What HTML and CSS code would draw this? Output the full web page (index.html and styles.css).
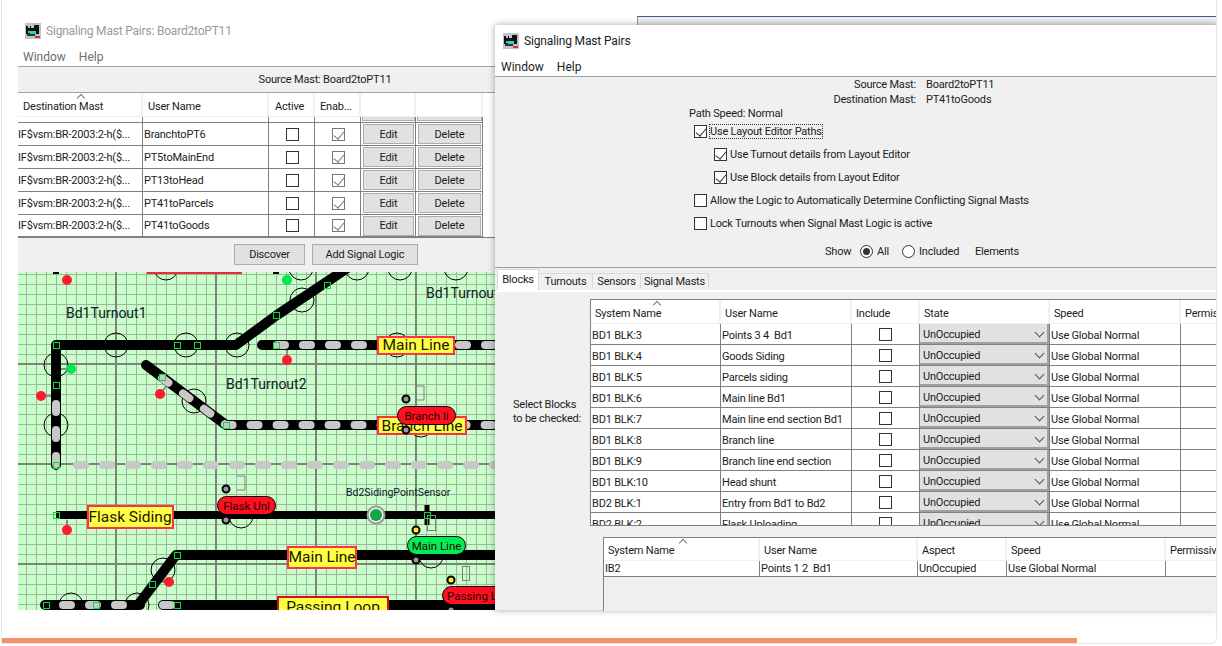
FILE: index.html
```html
<!DOCTYPE html>
<html lang="en">
<head>
    <meta charset="UTF-8">
    <title>Signaling Mast Pairs</title>
    <link rel="stylesheet" href="styles.css">
</head>
<body>
    <svg class="defs" width="0" height="0">
        <symbol id="jmri" viewBox="0 0 16 16">
            <rect width="16" height="16" fill="#c4c4c4"/>
            <path d="M1 3h2v2h2V3h1v2h3V2h5v9H1z" fill="#111"/>
            <rect x="3" y="8" width="8" height="2" fill="#2fd0d0"/>
            <rect x="5" y="10" width="6" height="2" fill="#2fd0d0"/>
            <rect x="10" y="13" width="5" height="2" fill="#c8343c"/>
            <rect x="2" y="11" width="8" height="2" fill="#333"/>
        </symbol>
    </svg>

    <div class="card">
        <div class="far-strip"></div>

        <!-- back window, mostly hidden by the other one -->
        <section class="win win-back">
            <div class="title-bar">
                <svg class="app-icon"><use href="#jmri"/></svg>
                <span>Signaling Mast Pairs: Board2toPT11</span>
            </div>
            <div class="menu-bar"><span>Window</span><span>Help</span></div>
            <div class="source-bar">Source Mast: Board2toPT11</div>
            <table class="pairs">
                <thead>
                    <tr>
                        <th class="sorted">Destination Mast</th>
                        <th>User Name</th>
                        <th>Active</th>
                        <th>Enab...</th>
                        <th></th>
                        <th></th>
                    </tr>
                </thead>
                <tbody>
                    <tr class="cut"><td></td><td></td><td></td><td></td><td><span class="btn"></span></td><td><span class="btn"></span></td></tr>
                    <tr>
                        <td>IF$vsm:BR-2003:2-h($...</td><td>BranchtoPT6</td>
                        <td class="mid"><span class="chk"></span></td><td class="mid"><span class="chk soft on"></span></td>
                        <td><span class="btn">Edit</span></td><td><span class="btn">Delete</span></td>
                    </tr>
                    <tr>
                        <td>IF$vsm:BR-2003:2-h($...</td><td>PT5toMainEnd</td>
                        <td class="mid"><span class="chk"></span></td><td class="mid"><span class="chk soft on"></span></td>
                        <td><span class="btn">Edit</span></td><td><span class="btn">Delete</span></td>
                    </tr>
                    <tr>
                        <td>IF$vsm:BR-2003:2-h($...</td><td>PT13toHead</td>
                        <td class="mid"><span class="chk"></span></td><td class="mid"><span class="chk soft on"></span></td>
                        <td><span class="btn">Edit</span></td><td><span class="btn">Delete</span></td>
                    </tr>
                    <tr>
                        <td>IF$vsm:BR-2003:2-h($...</td><td>PT41toParcels</td>
                        <td class="mid"><span class="chk"></span></td><td class="mid"><span class="chk soft on"></span></td>
                        <td><span class="btn">Edit</span></td><td><span class="btn">Delete</span></td>
                    </tr>
                    <tr>
                        <td>IF$vsm:BR-2003:2-h($...</td><td>PT41toGoods</td>
                        <td class="mid"><span class="chk"></span></td><td class="mid"><span class="chk soft on"></span></td>
                        <td><span class="btn">Edit</span></td><td><span class="btn">Delete</span></td>
                    </tr>
                </tbody>
            </table>
            <div class="pairs-foot">
                <span class="btn wide discover">Discover</span>
                <span class="btn wide add-logic">Add Signal Logic</span>
            </div>

            <!-- layout editor panel, viewBox uses screen coordinates -->
            <svg class="layout" width="478" height="338" viewBox="18 272 478 338">
                <defs>
                    <pattern id="grid" patternUnits="userSpaceOnUse" x="16" y="64" width="100" height="100">
                        <path class="minor" d="M10.5 0V100M20.5 0V100M30.5 0V100M40.5 0V100M50.5 0V100M60.5 0V100M70.5 0V100M80.5 0V100M90.5 0V100M0 10.5H100M0 20.5H100M0 30.5H100M0 40.5H100M0 50.5H100M0 60.5H100M0 70.5H100M0 80.5H100M0 90.5H100"/>
                        <path class="major" d="M0 0V100M100 0V100M0 0H100M0 100H100"/>
                    </pattern>
                </defs>
                <rect class="board" x="18" y="272" width="478" height="338"/>
                <rect x="18" y="272" width="478" height="338" fill="url(#grid)"/>

                <!-- stems from signal heads -->
                <path class="stem" d="M287 350V360M56 369H71M41 396H56M160 394L168 384M67 520V530M169 582L160 578"/>

                <!-- turnout circles -->
                <g class="ring">
                    <circle cx="116" cy="345" r="12"/><circle cx="186" cy="345" r="12"/><circle cx="237" cy="345" r="12"/>
                    <circle cx="302" cy="300" r="12"/><circle cx="56" cy="365" r="12"/><circle cx="56" cy="425" r="12"/>
                    <circle cx="194" cy="401" r="12"/><circle cx="397" cy="345" r="12"/><circle cx="421" cy="425" r="12"/>
                    <circle cx="166" cy="268" r="12"/><circle cx="301" cy="268" r="12"/><circle cx="357" cy="268" r="12"/>
                    <circle cx="400" cy="268" r="12"/><circle cx="456" cy="268" r="12"/><circle cx="241" cy="516" r="12"/>
                    <circle cx="431" cy="556" r="12"/><circle cx="163" cy="570" r="12"/><circle cx="71" cy="605" r="12"/>
                    <circle cx="137" cy="605" r="12"/>
                </g>

                <!-- track -->
                <path class="trk" d="M56 465V345H236L277 315L352 265"/>
                <path class="trk" d="M262 345H500"/>
                <path class="trk" d="M146 365L226 425H500"/>
                <path class="trk thin" d="M56 515H500"/>
                <path class="trk stub" d="M427 505V525"/>
                <path class="trk" d="M500 555H176L138 605"/>
                <path class="trk" d="M45 605H140"/>
                <path class="trk" d="M163 605H500"/>
                <path class="dash" d="M277 345H500"/>
                <path class="dash" d="M162 378L226 425H500"/>
                <path class="dash" d="M56 404V465"/>
                <path class="dash" d="M77 465H500"/>
                <path class="dash" d="M63 605H140"/>
                <path class="dash" d="M163 605H175"/>
                <path class="scrap" d="M53 272h6v2h-6zM148 272h6v2h-6zM273 272h6v2h-6z"/>
                <rect class="scrap-label" x="147" y="271" width="95" height="3"/>

                <!-- block boundary squares -->
                <g class="sq">
                    <rect x="53.5" y="342.5" width="6" height="6"/><rect x="174.5" y="342.5" width="6" height="6"/><rect x="194.5" y="342.5" width="6" height="6"/>
                    <rect x="273.5" y="312.5" width="6" height="6"/><rect x="324.5" y="282.5" width="6" height="6"/><rect x="273.5" y="342.5" width="6" height="6"/>
                    <rect x="53.5" y="382.5" width="6" height="6"/><rect x="159.5" y="374.5" width="6" height="6"/><rect x="223.5" y="422.5" width="6" height="6"/>
                    <rect x="53.5" y="462.5" width="6" height="6"/><rect x="53.5" y="512.5" width="6" height="6"/><rect x="424.5" y="512.5" width="6" height="6"/>
                    <rect x="174.5" y="552.5" width="6" height="6"/><rect x="149.5" y="581.5" width="6" height="6"/><rect x="43.5" y="602.5" width="6" height="6"/>
                    <rect x="93.5" y="602.5" width="6" height="6"/><rect x="174.5" y="602.5" width="6" height="6"/>
                </g>

                <!-- signal heads -->
                <g class="lamp-red">
                    <circle cx="67" cy="280" r="5"/><circle cx="287" cy="360" r="5"/><circle cx="41" cy="396" r="5"/>
                    <circle cx="160" cy="394" r="5"/><circle cx="67" cy="530" r="5"/><circle cx="169" cy="582" r="5"/>
                </g>
                <g class="lamp-green">
                    <circle cx="287" cy="280" r="5"/><circle cx="71" cy="369" r="5"/>
                </g>

                <!-- sensor outlines -->
                <g class="memo">
                    <path d="M417 386h7v14h-7"/><path d="M237 476h8v14h-8"/>
                    <rect x="427.5" y="515.5" width="8" height="15"/><rect x="462.5" y="566.5" width="7" height="14"/>
                </g>

                <text class="tag" x="66" y="318">Bd1Turnout1</text>
                <text class="tag" x="226" y="389">Bd1Turnout2</text>
                <text class="tag" x="426" y="298">Bd1Turnout3</text>
                <text class="tag small" x="346" y="496">Bd2SidingPointSensor</text>

                <circle class="sensor-rim" cx="376" cy="515" r="8.5"/>
                <circle class="sensor-core" cx="376" cy="515" r="6"/>

                <!-- block labels -->
                <g class="blk">
                    <rect x="378" y="337" width="76" height="17"/><text x="416" y="350">Main Line</text>
                    <rect x="378" y="417" width="88" height="17"/><text x="422" y="431">Branch Line</text>
                    <rect x="88" y="506" width="85" height="22"/><text x="130" y="522">Flask Siding</text>
                    <rect x="288" y="547" width="68" height="21"/><text x="322" y="562">Main Line</text>
                    <rect class="deep" x="278" y="597" width="110" height="24"/><text x="333" y="612">Passing Loop</text>
                </g>

                <!-- occupancy pills with their detector dots -->
                <g class="dot">
                    <circle cx="406" cy="399" r="3.5"/><circle cx="406" cy="430" r="3.5"/><circle cx="226" cy="489" r="3.5"/>
                    <circle cx="226" cy="520" r="3.5"/><circle cx="416" cy="560" r="3.5"/><circle cx="451" cy="610" r="3.5"/>
                </g>
                <g class="dot yellow">
                    <circle cx="416" cy="530" r="3.5"/><circle cx="451" cy="580" r="3.5"/>
                </g>
                <g class="pill">
                    <rect x="397.5" y="406.5" width="58" height="18" rx="9"/><text x="426.5" y="420">Branch li</text>
                    <rect x="217.5" y="496.5" width="58" height="18" rx="9"/><text x="246.5" y="510">Flask Unl</text>
                    <rect class="go" x="407.5" y="536.5" width="58" height="18" rx="9"/><text x="436.5" y="550">Main Line</text>
                    <rect x="442.5" y="586.5" width="70" height="18" rx="9"/><text x="447" y="600" class="start">Passing Loop</text>
                </g>
            </svg>
        </section>

        <!-- front window -->
        <section class="win win-front">
            <div class="title-bar">
                <svg class="app-icon"><use href="#jmri"/></svg>
                <span>Signaling Mast Pairs</span>
            </div>
            <div class="menu-bar"><span>Window</span><span>Help</span></div>
            <div class="options">
                <div class="mast-row"><label>Source Mast:</label><span>Board2toPT11</span></div>
                <div class="mast-row"><label>Destination Mast:</label><span>PT41toGoods</span></div>
                <div class="path-speed">Path Speed: Normal</div>
                <div class="opt"><span class="chk on"></span><span class="focus">Use Layout Editor Paths</span></div>
                <div class="opt sub"><span class="chk on"></span><span>Use Turnout details from Layout Editor</span></div>
                <div class="opt sub"><span class="chk on"></span><span>Use Block details from Layout Editor</span></div>
                <div class="opt"><span class="chk"></span><span>Allow the Logic to Automatically Determine Conflicting Signal Masts</span></div>
                <div class="opt"><span class="chk"></span><span>Lock Turnouts when Signal Mast Logic is active</span></div>
                <div class="show-row">
                    <span class="show-lbl">Show</span>
                    <span class="radio on"></span><span class="all-lbl">All</span>
                    <span class="radio"></span><span class="inc-lbl">Included</span>
                    <span>Elements</span>
                </div>
            </div>
            <div class="tabs">
                <span class="tab active">Blocks</span>
                <span class="tab t-turnouts">Turnouts</span>
                <span class="tab t-sensors">Sensors</span>
                <span class="tab t-masts">Signal Masts</span>
            </div>
            <div class="pane">
                <div class="pane-label">Select Blocks<br>to be checked:</div>
                <div class="pane-tables">
                    <div class="scroll upper">
                        <table class="grid blocks">
                            <thead>
                                <tr><th class="sorted">System Name</th><th>User Name</th><th>Include</th><th>State</th><th>Speed</th><th>Permissive</th></tr>
                            </thead>
                            <tbody>
                                <tr><td>BD1 BLK:3</td><td>Points 3 4&nbsp; Bd1</td><td class="mid"><span class="chk"></span></td><td class="combo-cell"><span class="combo">UnOccupied</span></td><td>Use Global Normal</td><td></td></tr>
                                <tr><td>BD1 BLK:4</td><td>Goods Siding</td><td class="mid"><span class="chk"></span></td><td class="combo-cell"><span class="combo">UnOccupied</span></td><td>Use Global Normal</td><td></td></tr>
                                <tr><td>BD1 BLK:5</td><td>Parcels siding</td><td class="mid"><span class="chk"></span></td><td class="combo-cell"><span class="combo">UnOccupied</span></td><td>Use Global Normal</td><td></td></tr>
                                <tr><td>BD1 BLK:6</td><td>Main line Bd1</td><td class="mid"><span class="chk"></span></td><td class="combo-cell"><span class="combo">UnOccupied</span></td><td>Use Global Normal</td><td></td></tr>
                                <tr><td>BD1 BLK:7</td><td>Main line end section Bd1</td><td class="mid"><span class="chk"></span></td><td class="combo-cell"><span class="combo">UnOccupied</span></td><td>Use Global Normal</td><td></td></tr>
                                <tr><td>BD1 BLK:8</td><td>Branch line</td><td class="mid"><span class="chk"></span></td><td class="combo-cell"><span class="combo">UnOccupied</span></td><td>Use Global Normal</td><td></td></tr>
                                <tr><td>BD1 BLK:9</td><td>Branch line end section</td><td class="mid"><span class="chk"></span></td><td class="combo-cell"><span class="combo">UnOccupied</span></td><td>Use Global Normal</td><td></td></tr>
                                <tr><td>BD1 BLK:10</td><td>Head shunt</td><td class="mid"><span class="chk"></span></td><td class="combo-cell"><span class="combo">UnOccupied</span></td><td>Use Global Normal</td><td></td></tr>
                                <tr><td>BD2 BLK:1</td><td>Entry from Bd1 to Bd2</td><td class="mid"><span class="chk"></span></td><td class="combo-cell"><span class="combo">UnOccupied</span></td><td>Use Global Normal</td><td></td></tr>
                                <tr><td>BD2 BLK:2</td><td>Flask Uploading</td><td class="mid"><span class="chk"></span></td><td class="combo-cell"><span class="combo">UnOccupied</span></td><td>Use Global Normal</td><td></td></tr>
                            </tbody>
                        </table>
                    </div>
                    <div class="scroll lower">
                        <table class="grid masts">
                            <thead>
                                <tr><th class="sorted">System Name</th><th>User Name</th><th>Aspect</th><th>Speed</th><th>Permissive</th></tr>
                            </thead>
                            <tbody>
                                <tr><td>IB2</td><td>Points 1 2&nbsp; Bd1</td><td>UnOccupied</td><td>Use Global Normal</td><td></td></tr>
                            </tbody>
                        </table>
                    </div>
                </div>
            </div>
        </section>

        <div class="progress"></div>
    </div>
</body>
</html>
```

FILE: styles.css
```css
* {
    box-sizing: border-box;
}
body {
    margin: 0;
    background: #fff;
    font-family: Roboto, 'Liberation Sans', Arial, sans-serif;
    font-size: 11px;
    letter-spacing: -0.2px;
    color: #1c1c1c;
    overflow: hidden;
}
.defs {
    position: absolute;
}
.card {
    position: relative;
    width: 1216px;
    height: 644px;
    margin-left: 1px;
    border: 1px solid #e6e6ee;
    border-top: none;
    border-radius: 0 0 6px 0;
    display: flex;
    flex-direction: column;
    justify-content: flex-end;
    overflow: hidden;
}
.progress {
    width: 1075px;
    height: 5px;
    background: #f79068;
}
.far-strip {
    position: absolute;
    left: 635px;
    top: 16px;
    right: 0;
    height: 12px;
    border-top: 1px solid #3f5b82;
    border-left: 1px solid #999;
    background: linear-gradient(#f2f2f2, #dcdcdc);
}

/* windows */
.win {
    position: absolute;
    background: #fff;
}
.win-back {
    left: 16px;
    top: 18px;
    width: 480px;
    height: 592px;
}
.win-front {
    left: 493px;
    top: 25px;
    width: 722px;
    height: 585px;
    background: #f0f0f0;
    box-shadow: 0 0 7px rgba(0,0,0,0.35);
}
.title-bar {
    display: flex;
    align-items: center;
    background: #fff;
    font-size: 12px;
}
.app-icon {
    width: 16px;
    height: 16px;
    flex: none;
}
.win-back .title-bar {
    height: 26px;
    padding-left: 7px;
    gap: 5px;
    color: #999;
}
.win-front .title-bar {
    height: 32px;
    padding-left: 8px;
    gap: 5px;
    letter-spacing: -0.15px;
}
.menu-bar {
    display: flex;
    background: #fff;
    border-bottom: 1px solid #a0a0a0;
    font-size: 12px;
    letter-spacing: 0;
}
.win-back .menu-bar {
    height: 23px;
    padding: 6px 0 0 5px;
    gap: 13px;
    color: #6e6e6e;
}
.win-front .menu-bar {
    height: 20px;
    padding: 3px 0 0 6px;
    gap: 13px;
}

/* back window table */
.source-bar {
    height: 26px;
    background: #f0f0f0;
    border-bottom: 1px solid #a0a0a0;
    text-align: center;
    line-height: 25px;
    padding-left: 134px;
}
.pairs {
    width: 465px;
    border-collapse: separate;
    border-spacing: 0;
    table-layout: fixed;
}
.pairs th {
    height: 24px;
    font-weight: 400;
    text-align: left;
    padding: 4px 0 0 5px;
    border-right: 2px solid #f0f0f0;
    border-bottom: 1px solid #f0f0f0;
    position: relative;
}
.pairs th:nth-child(1) { width: 125px; }
.pairs th:nth-child(2) { width: 126px; }
.pairs th:nth-child(3) { width: 46px; padding-left: 6px; }
.pairs th:nth-child(4) { width: 46px; }
.pairs th:nth-child(5) { width: 55px; }
.pairs th:nth-child(6) { width: 67px; }
.pairs td {
    height: 23px;
    padding: 0 0 0 1px;
    border-right: 1px solid #808080;
    border-bottom: 1px solid #808080;
    white-space: nowrap;
    overflow: hidden;
}
.pairs td:first-child {
    padding-left: 0;
}
.pairs tr.cut td {
    height: 6px;
    padding: 0;
    line-height: 0;
}
.pairs tr.cut .btn {
    height: 4px;
    margin: 0 0 1px 1px;
    border-top: none;
}
.pairs tr:last-child td {
    border-bottom: 2px solid #808080;
}
.mid {
    text-align: center;
}
.btn {
    display: flex;
    align-items: center;
    justify-content: center;
    height: 20px;
    margin: 0 1px;
    background: #e1e1e1;
    border: 1px solid #adadad;
}
.pairs-foot {
    height: 35px;
    background: #f0f0f0;
    display: flex;
    align-items: flex-start;
    padding-top: 6px;
    border-top: 1px solid #808080;
    margin-top: -1px;
}
.btn.wide {
    height: 21px;
    margin: 0;
}
.discover {
    width: 71px;
    margin-left: 216px !important;
}
.add-logic {
    width: 106px;
    margin-left: 7px !important;
}

/* checkboxes */
.chk {
    display: inline-block;
    position: relative;
    vertical-align: middle;
    width: 13px;
    height: 13px;
    background: #fff;
    border: 1px solid #333;
}
.chk.soft {
    border-color: #777;
}
.chk.on::after {
    content: "";
    position: absolute;
    left: 3px;
    top: 0;
    width: 5px;
    height: 9px;
    border: solid #333;
    border-width: 0 1px 1px 0;
    transform: rotate(40deg);
}
.chk.soft.on::after {
    border-color: #777;
}

/* layout panel */
.layout {
    display: block;
    letter-spacing: 0;
}
.board { fill: #c8ffc8; }
.minor { stroke: #a3b3a3; stroke-width: 1; fill: none; }
.major { stroke: #808080; stroke-width: 2; fill: none; }
.stem { stroke: #8a8a8a; stroke-width: 2; fill: none; }
.ring { fill: none; stroke: #000; stroke-width: 1; }
.trk { fill: none; stroke: #000; stroke-width: 10; stroke-linecap: round; stroke-linejoin: round; }
.trk.thin { stroke-width: 8; stroke-linecap: butt; }
.trk.stub { stroke-width: 5; stroke-linecap: butt; }
.dash { fill: none; stroke: #c8c8c8; stroke-width: 8; stroke-linecap: round; stroke-dasharray: 8 18; }
.scrap { fill: #000; }
.scrap-label { fill: #e83030; }
.sq { fill: none; stroke: #00e040; stroke-width: 1; }
.lamp-red { fill: #ff1a30; }
.lamp-green { fill: #00e84c; }
.memo { fill: none; stroke: #808080; stroke-width: 1; }
.tag { font-size: 14px; fill: #10202a; }
.tag.small { font-size: 10.5px; }
.sensor-rim { fill: #eef2ee; stroke: #999; stroke-width: 2; }
.sensor-core { fill: #10a840; }
.blk rect { fill: #ffff44; stroke: #ff3048; stroke-width: 2; }
.blk rect.deep { stroke: #d01020; }
.blk text { font-size: 15.5px; fill: #181800; text-anchor: middle; }
.dot circle { fill: #999; stroke: #000; stroke-width: 2; }
.dot.yellow circle { fill: #ffee30; }
.pill rect { fill: #ff1020; stroke: #000; stroke-width: 1; }
.pill rect.go { fill: #00ee55; }
.pill text { font-size: 11.5px; fill: #2a0000; text-anchor: middle; }
.pill text.start { text-anchor: start; }

/* front window options */
.options {
    height: 191px;
    padding-top: 1px;
    border-bottom: 1px solid #a0a0a0;
}
.mast-row {
    display: flex;
    height: 14px;
    line-height: 14px;
    gap: 10px;
}
.mast-row:first-child {
    height: 15px;
}
.mast-row label {
    width: 421px;
    text-align: right;
}
.path-speed {
    height: 13px;
    line-height: 14px;
    padding-left: 194px;
}
.opt {
    display: flex;
    align-items: center;
    height: 23px;
    padding-left: 199px;
    gap: 3px;
}
.opt.sub {
    padding-left: 219px;
}
.focus {
    outline: 1px dotted #333;
}
.show-row {
    display: flex;
    align-items: center;
    height: 22px;
    margin-top: 5px;
    padding-left: 330px;
}
.show-lbl { width: 35px; }
.all-lbl { width: 25px; margin-left: 4px; }
.inc-lbl { width: 56px; margin-left: 4px; }
.radio {
    position: relative;
    width: 13px;
    height: 13px;
    background: #fff;
    border: 1px solid #333;
    border-radius: 50%;
}
.radio.on::after {
    content: "";
    position: absolute;
    left: 2px;
    top: 2px;
    width: 7px;
    height: 7px;
    border-radius: 50%;
    background: #333;
}

/* tabs */
.tabs {
    display: flex;
    align-items: flex-end;
    height: 22px;
    padding-left: 2px;
}
.tab {
    display: flex;
    align-items: center;
    justify-content: center;
    height: 16px;
    background: #f0f0f0;
    border: 1px solid #d9d9d9;
    border-bottom: none;
    border-left: none;
    margin-bottom: 1px;
}
.tab.active {
    width: 42px;
    height: 21px;
    background: #fff;
    border: 1px solid #d9d9d9;
    border-bottom: none;
    margin-bottom: 0;
    padding-bottom: 2px;
}
.t-turnouts { width: 54px; }
.t-sensors { width: 48px; }
.t-masts { width: 68px; }

/* tables under the tabs */
.pane {
    display: flex;
    height: 319px;
    border-top: 2px solid #fff;
}
.pane-label {
    width: 95px;
    padding: 106px 0 0 18px;
    line-height: 14px;
}
.pane-tables {
    flex: 1;
    min-width: 0;
    padding-top: 7px;
}
.scroll {
    overflow: hidden;
    background: #fff;
    width: 100%;
}
.upper {
    height: 227px;
    border-top: 1px solid #808080;
    border-left: 1px solid #808080;
    border-bottom: 1px solid #808080;
}
.lower {
    height: 74px;
    margin: 11px 0 0 13px;
    width: calc(100% - 13px);
    background: #f0f0f0;
    border-top: 1px solid #808080;
    border-left: 1px solid #808080;
}
.grid {
    border-collapse: separate;
    border-spacing: 0;
    table-layout: fixed;
    background: #fff;
}
.blocks { width: 710px; }
.masts { width: 662px; }
.grid th {
    height: 24px;
    font-weight: 400;
    text-align: left;
    padding: 3px 0 0 4px;
    border-right: 2px solid #f0f0f0;
    border-bottom: 1px solid #f0f0f0;
    position: relative;
}
.grid td {
    height: 21px;
    padding: 2px 0 0 1px;
    border-right: 1px solid #808080;
    border-bottom: 1px solid #808080;
    white-space: nowrap;
    overflow: hidden;
}
.masts th {
    height: 23px;
}
.masts td {
    height: 16px;
    padding-top: 1px;
    line-height: 14px;
}
.blocks th:nth-child(1) { width: 130px; }
.blocks th:nth-child(2) { width: 131px; }
.blocks th:nth-child(3) { width: 68px; }
.blocks th:nth-child(4) { width: 130px; }
.blocks th:nth-child(5) { width: 131px; }
.blocks th:nth-child(6) { width: 120px; }
.masts th:nth-child(1) { width: 156px; }
.masts th:nth-child(2) { width: 158px; }
.masts th:nth-child(3) { width: 89px; }
.masts th:nth-child(4) { width: 159px; }
.masts th:nth-child(5) { width: 100px; }
.grid td.mid {
    padding: 0;
}
.grid td.combo-cell {
    padding: 0;
}
.combo {
    position: relative;
    display: flex;
    align-items: center;
    height: 20px;
    padding: 2px 0 0 3px;
    background: #e1e1e1;
    border: 2px solid #a0a0a0;
    border-width: 0 2px 2px 0;
}
.combo::after {
    content: "";
    position: absolute;
    right: 4px;
    top: 5px;
    width: 6px;
    height: 6px;
    border: solid #555;
    border-width: 0 1px 1px 0;
    transform: rotate(45deg);
}

/* sort arrow sits on top of the header cell */
.sorted::before {
    content: "";
    position: absolute;
    top: 2px;
    width: 5px;
    height: 5px;
    border: solid #777;
    border-width: 1px 0 0 1px;
    transform: rotate(45deg);
}
.pairs .sorted::before { left: 60px; }
.blocks .sorted::before { left: 63px; }
.masts .sorted::before { left: 76px; }
```
